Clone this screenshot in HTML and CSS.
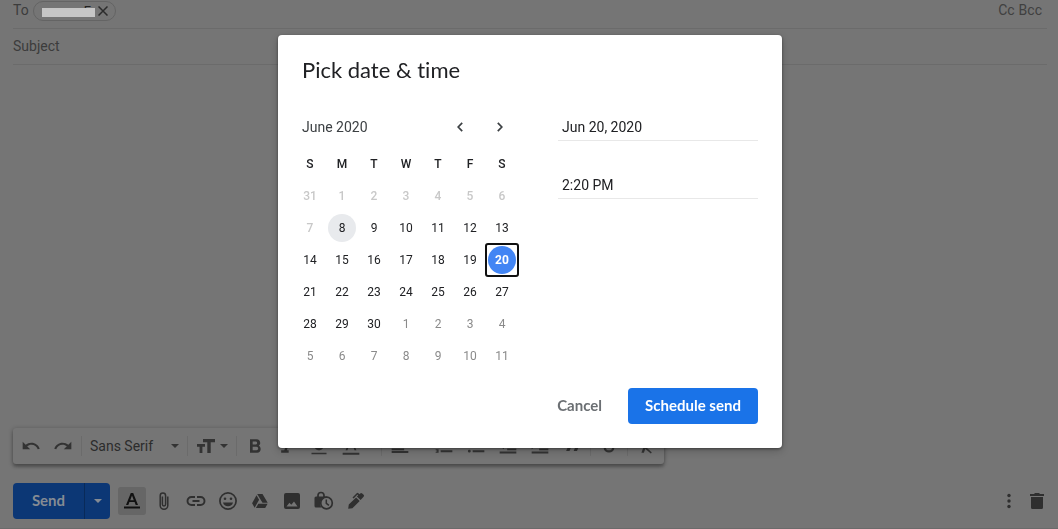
FILE: index.html
```html
<!DOCTYPE html>
<html lang="en">
<head>
<meta charset="utf-8">
<title>Schedule send</title>
<link rel="stylesheet" href="styles.css">
</head>
<body>
<main class="compose">
  <div class="row to-row">
    <span class="to-label">To</span>
    <span class="chip">
      <span class="chip-name">F<span class="chip-mask"></span></span>
      <button class="plain chip-close" aria-label="Remove recipient"><svg width="10" height="10" viewBox="0 0 10 10"><path d="M.5.5l9 9M9.5.5l-9 9" fill="none" stroke="currentColor" stroke-width="1.5"/></svg></button>
    </span>
    <span class="copies"><button class="plain">Cc</button><button class="plain">Bcc</button></span>
  </div>
  <div class="row subject-row"><input class="subject" aria-label="Subject" placeholder="Subject"></div>
  <textarea class="message" aria-label="Message body"></textarea>

  <div class="format-bar">
    <button class="tool" aria-label="Undo"><svg class="icon" viewBox="0 0 24 24"><path d="M12.5 8c-2.65 0-5.05.99-6.9 2.6L2 7v9h9l-3.62-3.62c1.39-1.16 3.16-1.88 5.12-1.88 3.54 0 6.55 2.31 7.6 5.5l2.37-.78C21.08 11.03 17.15 8 12.5 8z"/></svg></button>
    <button class="tool" aria-label="Redo"><svg class="icon" viewBox="0 0 24 24"><path d="M18.4 10.6C16.55 8.99 14.15 8 11.5 8c-4.65 0-8.58 3.03-9.96 7.22L3.9 16c1.05-3.19 4.05-5.5 7.6-5.5 1.95 0 3.73.72 5.12 1.88L13 16h9V7l-3.6 3.6z"/></svg></button>
    <span class="divider"></span>
    <label class="font-picker"><select class="font-select" aria-label="Font"><option>Sans Serif</option></select><svg class="caret" viewBox="0 0 8 4"><path d="M0 0h8L4 4z"/></svg></label>
    <span class="divider"></span>
    <button class="tool tool-menu" aria-label="Size"><svg class="icon" viewBox="0 0 20 20"><path d="M7 3h12v3.200h-4.300V17h-3.400V6.200H7zM1 8h8v2.700H6.400V17H3.600v-6.300H1z"/></svg><svg class="caret" viewBox="0 0 8 4"><path d="M0 0h8L4 4z"/></svg></button>
    <span class="divider"></span>
    <button class="tool" aria-label="Bold"><svg class="icon" viewBox="0 0 24 24"><path d="M16.6 11.3c1-.7 1.7-1.9 1.7-3C18.3 5.900 16.400 4 14 4H6v16h8.700c2.300 0 4.100-1.900 4.100-4.200 0-2-1-3.700-2.200-4.500zM9.200 6.700h4a1.800 1.800 0 010 3.500h-4zm4.500 10.500H9.200v-4.300h4.500a2.100 2.100 0 010 4.300z"/></svg></button>
    <button class="tool" aria-label="Italic"><svg class="icon" viewBox="0 0 24 24"><path d="M10 4v3h2.210l-3.420 10H5v3h9v-3h-2.210l3.420-10H18V4z"/></svg></button>
    <button class="tool" aria-label="Underline"><svg class="icon" viewBox="0 0 24 24"><path d="M12 17c3.310 0 6-2.690 6-6V3h-2.500v8c0 1.930-1.570 3.500-3.500 3.500S8.500 12.930 8.500 11V3H6v8c0 3.310 2.690 6 6 6zm-9 3v2h18v-2H3z"/></svg></button>
    <button class="tool tool-menu" aria-label="Text color"><svg class="icon" viewBox="0 0 24 24"><path d="M2 20h20v2.500H2zM11 3L5.500 17h2.250l1.120-3h6.250l1.120 3h2.250L13 3h-2zm-1.380 9L12 5.670 14.380 12H9.620z"/></svg><svg class="caret" viewBox="0 0 8 4"><path d="M0 0h8L4 4z"/></svg></button>
    <span class="divider"></span>
    <button class="tool tool-menu" aria-label="Align"><svg class="icon" viewBox="0 0 24 24"><path d="M17 15H2v2.200h15zm0-8H2v2h15V7zM2 13h20v-2H2v2zm0 7.500h20V18H2zM2 3v2h20V3z"/></svg><svg class="caret" viewBox="0 0 8 4"><path d="M0 0h8L4 4z"/></svg></button>
    <button class="tool" aria-label="Numbered list"><svg class="icon" viewBox="0 0 24 24"><path d="M2 17h2v.5H3v1h1v.5H2v1h3.500v-4H2v1zm1-9h1V4H2v1h1v3zm-1 3h1.800L2 13.100v.9h3v-1H3.200L5 10.900V10H2v1zm6-6v2.500h14V5H8zm0 14.500h14V17H8v2.500zm0-6h14V11H8v2.500z"/></svg></button>
    <button class="tool" aria-label="Bulleted list"><svg class="icon" viewBox="0 0 24 24"><path d="M4 10.500a1.500 1.500 0 100 3 1.500 1.500 0 000-3zm0-6a1.500 1.500 0 100 3 1.500 1.500 0 000-3zm0 12a1.700 1.700 0 100 3.400 1.700 1.700 0 000-3.400zM8 19.500h14V17H8v2.500zm0-6h14V11H8v2.500zM8 5v2.500h14V5H8z"/></svg></button>
    <button class="tool" aria-label="Indent less"><svg class="icon" viewBox="0 0 24 24"><path d="M11 17h11v-2H11v2zm-9-5l5 4V8zm0 9h20v-2.500H2V21zM2 3v2.500h20V3H2zm9 6h11V7H11v2zm0 4h11v-2H11v2z"/></svg></button>
    <button class="tool" aria-label="Indent more"><svg class="icon" viewBox="0 0 24 24"><path d="M2 21h20v-2.500H2V21zM2 8v8l5-4zm9 9h11v-2H11v2zM2 3v2.500h20V3H2zm9 6h11V7H11v2zm0 4h11v-2H11v2z"/></svg></button>
    <button class="tool" aria-label="Quote"><svg class="icon" viewBox="0 0 24 24"><path d="M5 18h4l2.500-6V6H4v6h3.500zm9 0h4l2.500-6V6H13v6h3.500z"/></svg></button>
    <span class="divider"></span>
    <button class="tool" aria-label="Strikethrough"><svg class="icon" viewBox="0 0 24 24"><path d="M7 8a5 4 0 0110 0M17 14a5 4.500 0 01-10 0M3 12h18" fill="none" stroke="currentColor" stroke-width="2.800"/></svg></button>
    <span class="divider"></span>
    <button class="tool" aria-label="Remove formatting"><svg class="icon" viewBox="0 0 24 24"><path d="M3.300 5L2 6.300l7 7L6.500 20h3l1.600-4.600 6.600 5.600 1.300-1.300zM6 5v.2L8.800 8h2.400l-.7 1.700 2.100 2.100L14.200 8H20V5z"/></svg></button>
  </div>

  <div class="action-bar">
    <div class="send-group">
      <button class="send">Send</button>
      <button class="send-more" aria-label="More send options"><svg class="caret" viewBox="0 0 8 4"><path d="M0 0h8L4 4z"/></svg></button>
    </div>
    <div class="attach-tools">
      <button class="tool" aria-label="Formatting options"><span class="active-box"><svg class="icon" viewBox="0 0 20 20"><path d="M2 15.500h16v2H2zM8.800 2L4 14h2.300l1.100-2.900h5.200l1.100 2.900H16L11.200 2zM8.200 9.200L10 4.400l1.800 4.800z"/></svg></span></button>
      <button class="tool" aria-label="Attach files"><svg class="icon" viewBox="0 0 20 20"><path d="M13.800 5.500v9a3.800 3.800 0 01-7.600 0V4.700a2.700 2.700 0 015.400 0v8.600a1.600 1.600 0 01-3.200 0V5.500" fill="none" stroke="currentColor" stroke-width="1.500"/></svg></button>
      <button class="tool" aria-label="Insert link"><svg class="icon" viewBox="0 0 20 20"><path d="M9 6H5.500a4 4 0 000 8H9M11 6h3.500a4 4 0 010 8H11M6.500 10h7" fill="none" stroke="currentColor" stroke-width="1.900"/></svg></button>
      <button class="tool" aria-label="Insert emoji"><svg class="icon" viewBox="0 0 20 20"><circle cx="10" cy="10" r="8.100" fill="none" stroke="currentColor" stroke-width="1.700"/><circle cx="7" cy="7.700" r="1.300"/><circle cx="13" cy="7.700" r="1.300"/><path d="M5 11.500h10a5.200 5.200 0 01-10 0z"/></svg></button>
      <button class="tool" aria-label="Insert from Drive"><svg class="icon" viewBox="0 0 20 20"><path d="M7.200 3h5.300l5.200 8.800h-5.200L9.300 6.500zM6.500 4.300l2.600 4.500-4.500 8-2.500-4.500zM8.300 12.700h9.300L15.200 17H5.900z"/></svg></button>
      <button class="tool" aria-label="Insert photo"><svg class="icon" viewBox="0 0 20 20"><path fill-rule="evenodd" d="M4 2h12a2 2 0 012 2v12a2 2 0 01-2 2H4a2 2 0 01-2-2V4a2 2 0 012-2zm.500 13.500h11l-3.500-5-2.700 3.300-1.900-2z"/></svg></button>
      <button class="tool" aria-label="Confidential mode"><svg class="icon" viewBox="0 0 20 20"><path d="M4 6V4.500a3 3 0 016 0V6" fill="none" stroke="currentColor" stroke-width="1.700"/><path d="M2 5.500h10.500a1.500 1.500 0 011.500 1A6.300 6.300 0 007.500 16.500H2A1.500 1.500 0 01.5 15V7A1.500 1.500 0 012 5.500z"/><circle class="clock-face" cx="12.500" cy="12" r="5.800" stroke="currentColor" stroke-width="1.700"/><path d="M12.300 8.500v3.900l2.600 2" fill="none" stroke="currentColor" stroke-width="1.500"/></svg></button>
      <button class="tool" aria-label="Insert signature"><svg class="icon" viewBox="0 0 20 20"><path d="M2.200 17.800l.600-4.200 7.300-7.200 3.600 3.600-7.300 7.200zM10.900 5.600l1.300-1.300L11.500 3.600 7.600 7.500 6.500 6.400l4.200-4.200a1.200 1.200 0 011.700 0l1 1 .8-.8a1.400 1.400 0 012 0l1.400 1.400a1.400 1.400 0 010 2l-3 3.300z"/></svg></button>
    </div>
    <div class="end-tools">
      <button class="plain" aria-label="More options"><svg class="icon" viewBox="0 0 20 20"><circle cx="10" cy="4.500" r="1.700"/><circle cx="10" cy="10" r="1.700"/><circle cx="10" cy="15.500" r="1.700"/></svg></button>
      <button class="plain" aria-label="Discard draft"><svg class="icon" viewBox="0 0 20 20"><path d="M3 3h4l1-1h4l1 1h4v2H3zM4 6h12v10.500a1.500 1.500 0 01-1.500 1.500h-9A1.500 1.500 0 014 16.500z"/></svg></button>
    </div>
  </div>
</main>

<div class="backdrop">
  <section class="dialog" role="dialog" aria-labelledby="dialog-title">
    <h1 class="title" id="dialog-title">Pick date &amp; time</h1>
    <div class="picker">
      <div class="calendar">
        <div class="month-bar">
          <span class="month">June 2020</span>
          <button class="nav" aria-label="Previous month"><svg width="6" height="10" viewBox="0 0 6 10"><path d="M5.200.8L1.200 5l4 4.200" fill="none" stroke="currentColor" stroke-width="1.700"/></svg></button>
          <button class="nav" aria-label="Next month"><svg width="6" height="10" viewBox="0 0 6 10"><path d="M.8.8l4 4.200-4 4.200" fill="none" stroke="currentColor" stroke-width="1.700"/></svg></button>
        </div>
        <table class="days">
          <thead><tr><th>S</th><th>M</th><th>T</th><th>W</th><th>T</th><th>F</th><th>S</th></tr></thead>
          <tbody>
            <tr class="past"><td><button class="day">31</button></td><td><button class="day">1</button></td><td><button class="day">2</button></td><td><button class="day">3</button></td><td><button class="day">4</button></td><td><button class="day">5</button></td><td><button class="day">6</button></td></tr>
            <tr><td class="past"><button class="day">7</button></td><td><button class="day today"><span class="disc">8</span></button></td><td><button class="day">9</button></td><td><button class="day">10</button></td><td><button class="day">11</button></td><td><button class="day">12</button></td><td><button class="day">13</button></td></tr>
            <tr><td><button class="day">14</button></td><td><button class="day">15</button></td><td><button class="day">16</button></td><td><button class="day">17</button></td><td><button class="day">18</button></td><td><button class="day">19</button></td><td><button class="day selected"><span class="disc">20</span></button></td></tr>
            <tr><td><button class="day">21</button></td><td><button class="day">22</button></td><td><button class="day">23</button></td><td><button class="day">24</button></td><td><button class="day">25</button></td><td><button class="day">26</button></td><td><button class="day">27</button></td></tr>
            <tr><td><button class="day">28</button></td><td><button class="day">29</button></td><td><button class="day">30</button></td><td class="next"><button class="day">1</button></td><td class="next"><button class="day">2</button></td><td class="next"><button class="day">3</button></td><td class="next"><button class="day">4</button></td></tr>
            <tr class="next"><td><button class="day">5</button></td><td><button class="day">6</button></td><td><button class="day">7</button></td><td><button class="day">8</button></td><td><button class="day">9</button></td><td><button class="day">10</button></td><td><button class="day">11</button></td></tr>
          </tbody>
        </table>
      </div>
      <div class="fields">
        <input class="field" aria-label="Date" value="Jun 20, 2020">
        <input class="field" aria-label="Time" value="2:20 PM">
      </div>
    </div>
    <div class="buttons">
      <button class="cancel">Cancel</button>
      <button class="schedule">Schedule send</button>
    </div>
  </section>
</div>
</body>
</html>
```
FILE: styles.css
```css
* { box-sizing: border-box; }
body {
  margin: 0;
  background: #757575;
  color: #3c3c3c;
  font: 14px/20px Roboto, "Liberation Sans", sans-serif;
}
button, input, select, textarea {
  margin: 0;
  padding: 0;
  border: 0;
  background: none;
  color: inherit;
  font: inherit;
  outline: 0;
}
svg { display: block; fill: currentColor; }

.compose {
  display: flex;
  flex-direction: column;
  min-height: 100vh;
  padding: 0 11px 9px 13px;
  border-bottom: 1px solid #6b6b6b;
}
.row { display: flex; border-bottom: 1px solid #6b6b6b; }
.to-row { height: 29px; align-items: flex-start; }
.to-label { width: 20px; }
.chip {
  display: flex;
  align-items: center;
  gap: 3px;
  height: 20px;
  margin-top: 1px;
  padding: 0 7px 0 8px;
  border: 1px solid #646464;
  border-radius: 10px;
}
.chip-name {
  position: relative;
  width: 53px;
  padding-right: 4px;
  text-align: right;
  font-size: 13px;
  color: #222;
}
.chip-mask {
  position: absolute;
  left: 0;
  right: 0;
  top: 7px;
  height: 9px;
  background: #c6c6c6;
}
.chip-close { color: #2c2c2c; }
.copies { display: flex; gap: 4px; margin-left: auto; padding-right: 5px; color: #404040; }
.subject-row { height: 36px; padding-bottom: 2px; align-items: center; }
.subject { flex: 1; }
.subject::placeholder { color: #3c3c3c; opacity: 1; }
.message { flex: 1; min-height: 80px; resize: none; }

.icon { width: 20px; height: 20px; }
.caret { width: 8px; height: 4px; }
.format-bar {
  display: flex;
  align-items: center;
  align-self: flex-start;
  height: 36px;
  padding: 0 2px;
  border-radius: 3px;
  background: #757575;
  box-shadow: 0 1px 5px rgba(0, 0, 0, .3), 0 3px 3px rgba(0, 0, 0, .2);
  color: #333;
}
.tool { display: flex; flex: none; align-items: center; justify-content: center; width: 32px; height: 32px; }
.tool-menu { width: 44px; gap: 4px; }
.divider { width: 1px; height: 20px; margin: 0 2px; background: #6b6b6b; }
.font-picker { display: grid; align-items: center; width: 101px; padding: 0 6px; }
.font-select, .font-picker .caret { grid-area: 1 / 1; }
.font-select { appearance: none; color: #2c2c2c; }
.font-picker .caret { justify-self: end; }

.action-bar { display: flex; align-items: center; margin-top: 19px; color: #2f2f2f; }
.send-group { display: flex; height: 36px; border-radius: 4px; overflow: hidden; background: #0c3775; color: #858b93; }
.send { width: 72px; padding-bottom: 2px; border-right: 1px solid #092a59; font: bold 15px Lato, sans-serif; }
.send-more { display: flex; align-items: center; justify-content: center; width: 25px; }
.attach-tools { display: flex; margin-left: 6px; }
.active-box { display: grid; place-items: center; width: 28px; height: 28px; border-radius: 3px; background: #666; color: #111; }
.clock-face { fill: #757575; }
.end-tools { display: flex; gap: 8px; margin-left: auto; }

.backdrop { position: fixed; inset: 0; display: flex; align-items: flex-start; justify-content: center; padding: 35px 0 0 2px; }
.dialog {
  padding: 24px;
  border-radius: 4px;
  background: #fff;
  box-shadow: 0 1px 3px rgba(0, 0, 0, .4), 0 3px 8px rgba(0, 0, 0, .2);
  color: #202124;
}
.title { margin: 0 0 26px; font: 22px/22px Lato, sans-serif; font-variant-ligatures: none; }
.picker { display: flex; gap: 38px; }
.calendar { width: 218px; }
.month-bar { display: flex; align-items: center; height: 40px; margin-bottom: 1px; }
.month { flex: 1; color: #3c4043; }
.nav { display: flex; align-items: center; justify-content: center; width: 40px; height: 40px; color: #3c4043; }
.days { width: 224px; margin-left: -8px; border-collapse: collapse; table-layout: fixed; font-size: 12px; }
.days th, .days td { height: 32px; padding: 0; text-align: center; }
.days th { font-weight: 500; }
.day { display: grid; place-items: center; width: 32px; height: 32px; }
.past .day { color: #c8c8c8; font-weight: 500; }
.next .day { color: #8a8a8a; }
.disc { display: grid; place-items: center; width: 28px; height: 28px; border-radius: 50%; }
.today .disc { background: #e8eaed; }
.selected { border-radius: 2px; outline: 2px solid #101010; outline-offset: -1px; }
.selected .disc { background: #4285f4; color: #fff; font-weight: 700; }
.fields { display: flex; flex-direction: column; gap: 30px; padding-top: 6px; }
.field { width: 200px; height: 28px; padding: 0 4px; border-bottom: 1px solid #e8e8e8; }
.buttons { display: flex; justify-content: flex-end; gap: 18px; margin-top: 16px; font: bold 15px Lato, sans-serif; }
.cancel { padding: 0 8px 2px; color: #6b6f73; }
.schedule { width: 130px; height: 36px; padding-bottom: 2px; border-radius: 4px; background: #1a73e8; color: #fff; }
```
